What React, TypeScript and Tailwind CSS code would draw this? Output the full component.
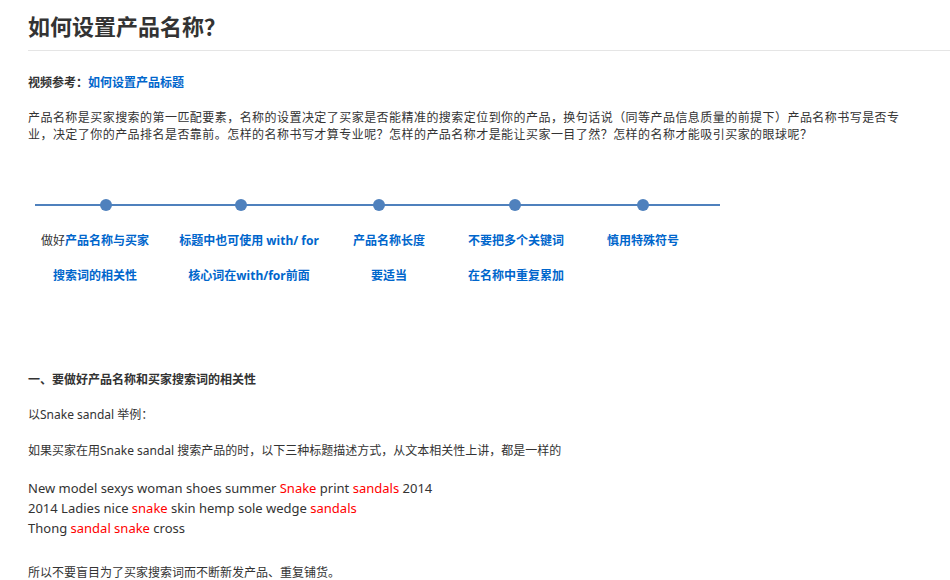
export default function App() {
  const f = { fontFamily: '"Noto Sans", "Noto Sans CJK SC", sans-serif' };
  const cjk = { fontFamily: '"Noto Sans CJK SC", sans-serif' };
  const dots = [106, 241, 379, 515, 643];
  const labels: [number, React.ReactNode, string][] = [
    [95, <><span className="text-[#333] font-normal">做好</span>产品名称与买家</>, "搜索词的相关性"],
    [249, "标题中也可使用 with/ for", "核心词在with/for前面"],
    [389, "产品名称长度", "要适当"],
    [516, "不要把多个关键词", "在名称中重复累加"],
    [643, "慎用特殊符号", ""],
  ];
  const red = "text-[#ff0000]";
  return (
    <div className="w-[950px] h-[580px] overflow-hidden bg-white text-[#333] text-[12px]" style={f}>
      <div className="pl-[28px] pt-[8px]">
        <h1 className="text-[22px] font-bold leading-[34px] text-[#333]" style={cjk}>如何设置产品名称？</h1>
      </div>
      <div className="ml-[28px] mt-[8px] h-px bg-[#e5e5e5]" />
      <div className="px-[28px]">
        <p className="mt-[21px] font-bold leading-[20px]" style={cjk}>
          视频参考：<span className="text-[#0066cc]">如何设置产品标题</span>
        </p>
        <p className="mt-[16px] leading-[17px] tracking-[0.45px]" style={cjk}>
          产品名称是买家搜索的第一匹配要素，名称的设置决定了买家是否能精准的搜索定位到你的产品，换句话说（同等产品信息质量的前提下）产品名称书写是否专业，决定了你的产品排名是否靠前。怎样的名称书写才算专业呢？怎样的产品名称才是能让买家一目了然？怎样的名称才能吸引买家的眼球呢？
        </p>
      </div>
      <div className="relative h-[170px] mt-[47px]">
        <svg className="absolute left-0 top-0" width="740" height="40">
          <line x1="35" y1="16" x2="720" y2="16" stroke="#4f81bd" strokeWidth="2" />
          {dots.map((x) => (
            <circle key={x} cx={x} cy="16" r="6" fill="#4f81bd" />
          ))}
        </svg>
        {labels.map(([cx, a, b], i) => (
          <div
            key={i}
            className="absolute w-[180px] -ml-[90px] text-center text-[#0066cc] font-bold leading-[20px]"
            style={{ left: cx, top: 42 }}
          >
            <div>{a}</div>
            <div className="mt-[15px]">{b}</div>
          </div>
        ))}
      </div>
      <div className="px-[28px] leading-[20px]">
        <p className="mt-[11px] font-bold">一、要做好产品名称和买家搜索词的相关性</p>
        <p className="mt-[15px]">以Snake sandal 举例：</p>
        <p className="mt-[16px]">如果买家在用Snake sandal 搜索产品的时，以下三种标题描述方式，从文本相关性上讲，都是一样的</p>
        <div className="mt-[17px] text-[13px]">
          <div>New model sexys woman shoes summer <span className={red}>Snake</span> print <span className={red}>sandals</span> 2014</div>
          <div>2014 Ladies nice <span className={red}>snake</span> skin hemp sole wedge <span className={red}>sandals</span></div>
          <div>Thong <span className={red}>sandal snake</span> cross</div>
        </div>
        <p className="mt-[25px]">所以不要盲目为了买家搜索词而不断新发产品、重复铺货。</p>
      </div>
    </div>
  );
}
